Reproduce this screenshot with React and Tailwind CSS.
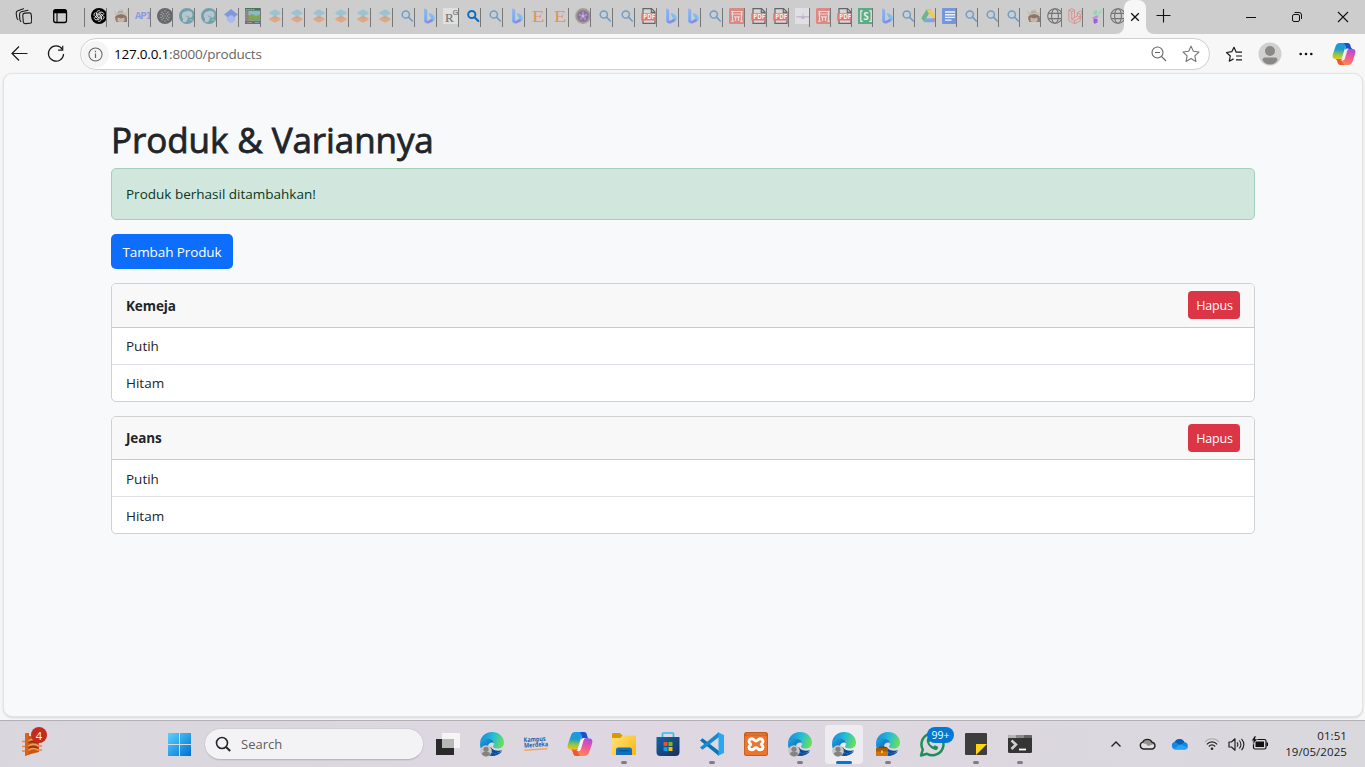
import React from "react";

/* ---------- Tab favicons (16 x 16) ---------- */

function Svg({ children, className = "", size = 16, box = "0 0 16 16" }) {
  return (
    <svg width={size} height={size} viewBox={box} fill="none" className={"shrink-0 " + className}>
      {children}
    </svg>
  );
}

const Gpt = () => (
  <Svg>
    <circle cx="8" cy="8" r="8" fill="#000" />
    <g stroke="#fff" strokeWidth="0.8">
      {[0, 60, 120, 180, 240, 300].map((a) => (
        <path key={a} transform={`rotate(${a} 8 8)`} d="M5.700 6V4.700a2.100 2.100 0 0 1 3.500-1.500M6.700 8.700V5.700L9.400 4.200" />
      ))}
    </g>
  </Svg>
);

const Character = () => (
  <Svg className="opacity-60">
    <path d="M1 2l3 1 4-2 4 1 3-1-1 6H2z" fill="#c3baa2" />
    <path d="M2 4l2-3 2 3M10 4l2-3 2 3" fill="#dcd6c8" />
    <path d="M5 3h5v2H5z" fill="#8f9aa0" />
    <path d="M2 10c0-5 12-5 12 0v4H3z" fill="#6a4735" />
    <path d="M4.500 9h7v4l-3.500 2-3.500-2z" fill="#c9a48c" />
    <path d="M3 8.500l5-2 5 2v2l-2-1-3 1-3-1-2 1z" fill="#5b3b30" />
    <path d="M0 10l2-1M14 10l2-1M0 15l3-2" stroke="#d8c9b4" strokeWidth="2" />
    <path d="M5 16l3-2 3 2z" fill="#ded5c4" />
  </Svg>
);

const Api = () => (
  <span className="block shrink-0 font-['Liberation_Mono',monospace] text-[10.500px] font-bold leading-4 tracking-[-0.8px] text-[#8b9be0]">
    API
  </span>
);

const DarkDots = () => (
  <Svg>
    <circle cx="8" cy="8" r="8" fill="#66686a" />
    <g fill="#a9abad">
      {[[5, 4.200], [8, 3], [11, 4.200], [6.500, 5.700], [9.500, 5.700], [4, 6.500], [12, 6.500], [5.500, 8], [8, 8], [10.500, 8], [4, 9.500], [12, 9.500], [6.500, 10.300], [9.500, 10.300], [5, 11.800], [8, 13], [11, 11.800]].map(([x, y]) => (
        <circle key={x + "-" + y} cx={x} cy={y} r="0.75" />
      ))}
    </g>
  </Svg>
);

const Elephant = () => (
  <Svg>
    <circle cx="8" cy="8" r="8" fill="#6fa0ab" />
    <path d="M3 9c-1-3 1-5.500 4-5.500 2-1.500 4.500-.5 6 1 1 2 .5 4.500-1.500 5.500-.7-1-2-1-2.500-.3L8 13c-1 1.500-3 1.500-4.500.5 1-1 .5-3-.5-4.500z" fill="#b7c6ca" />
    <path d="M7 7.500c.5 1.500 2 1.500 3 .3" stroke="#6fa0ab" strokeWidth=".8" />
    <path d="M10.500 12c1.500-.5 2.500 0 3.500.5" stroke="#b7c6ca" />
  </Svg>
);

const Scholar = () => (
  <Svg>
    <path d="M8 1l7 5.500-3 2H4l-3-2z" fill="#7d98de" />
    <circle cx="8" cy="10.500" r="4.300" fill="#a9baea" />
    <path d="M4.200 9c1.500-3.500 6.100-3.500 7.600 0" stroke="#8298d8" strokeWidth="1.500" />
  </Svg>
);

const Landscape = () => (
  <Svg>
    <path d="M0 0h16v16H0z" fill="#7fa286" />
    <path d="M3 3h13v5H3z" fill="#8db7cf" />
    <path d="M3 8l4-2 4 2 5-2v6H3z" fill="#84a54c" />
    <path d="M0 0h16v2.500H0z" fill="#45775d" />
    <path d="M1 1.500h9" stroke="#b5c58c" strokeWidth=".8" strokeDasharray="1.500 .7" />
    <path d="M0 2.500h3.500V13H0z" fill="#8e8580" />
    <path d="M0 13h16v3H0z" fill="#5e7784" />
    <path d="M2 14.500h5" stroke="#c98080" />
    <path d="M10 14.500h4" stroke="#7ea0c8" />
  </Svg>
);

const Stack = () => (
  <Svg>
    <path d="M8 8l5.500 2.300v1.800L8 14.700l-5.500-2.600v-1.800z" fill="#dfa888" />
    <path d="M8 1.300l5.500 2.900v1.600L8 8.500 2.500 5.800V4.200z" fill="#9cc3d0" />
    <path d="M4.500 9.300L8 8l3.500 1.300L8 10.700z" fill="#b9ab98" />
  </Svg>
);

const Search = ({ bold }) => (
  <Svg>
    <circle cx="6.800" cy="6.500" r="3.600" stroke={bold ? "#0f6cbd" : "#6f9dcb"} strokeWidth={bold ? 2 : 1.500} />
    <path d="M9.500 9.200l3.800 3.800" stroke={bold ? "#0f6cbd" : "#6f9dcb"} strokeWidth={bold ? 2.200 : 1.700} strokeLinecap="round" />
  </Svg>
);
const SearchBold = () => <Search bold />;

const Bing = () => (
  <Svg>
    <defs>
      <linearGradient id="bing" x1="3" y1="1" x2="5" y2="14" gradientUnits="userSpaceOnUse">
        <stop offset="0" stopColor="#8eb4ee" />
        <stop offset="1" stopColor="#74a6f4" />
      </linearGradient>
    </defs>
    <path d="M3.200.5c2 .4 3 1 3 2.800v8.200c-.1 1-.5 1.800-1 2.500-1.200-.3-2-1.200-2-2.500z" fill="url(#bing)" />
    <path d="M5.200 15.200c-1-.2-2-1.500-2-3.200 1 2 3.300.8 4.500.2l3-1.700 2.300 1.500c-1 1.500-2.500 2-3.500 2.600-1.500.9-3 1.100-4.300.6z" fill="#858fe6" />
    <path d="M7.800 5c3.500.8 6 2.500 6 5.200 0 1.800-.7 2.500-1.600 3 .2-1.600-.8-2.500-2.500-3.200-.8-1.500-1.800-3.500-1.900-5z" fill="#7bc0f3" />
  </Svg>
);

const ResearchGate = () => (
  <Svg>
    <path d="M0 0h16v16H0z" fill="#e0e0e0" />
    <text x="2" y="14" fontSize="13" fontFamily="Liberation Serif, serif" fill="#777" stroke="#777" strokeWidth=".2">R</text>
    <text x="9.800" y="7" fontSize="7" fontFamily="Liberation Sans, sans-serif" fill="#777" stroke="#777" strokeWidth=".2">G</text>
  </Svg>
);

const Etsy = () => (
  <Svg>
    <text x="1" y="13.800" fontSize="16" textLength="12.500" lengthAdjust="spacingAndGlyphs" fontFamily="Liberation Serif, serif" fill="#e0935c">E</text>
  </Svg>
);

const Flower = () => (
  <Svg>
    <circle cx="8" cy="8" r="7.300" fill="#9a8fa5" stroke="#aaa487" strokeWidth="1.200" />
    <circle cx="8" cy="8" r="5.600" fill="#84709f" />
    {[0, 72, 144, 216, 288].map((a) => (
      <circle key={a} cx="8" cy="4.800" r="1.300" fill="#a794c3" transform={`rotate(${a} 8 8)`} />
    ))}
    <circle cx="8" cy="8" r="1.700" fill="#c5bcd3" />
  </Svg>
);

const Pdf = () => (
  <Svg>
    <path d="M2 .6h8.500l3.500 3.500v11.300H2z" fill="#d6d6d6" stroke="#666" strokeWidth="1.200" />
    <path d="M10.300.6v3.700H14" stroke="#666" strokeWidth="1.200" />
    <path d="M.3 5.300h15.700v7.200H.3z" fill="#e07579" />
    <text x="8.200" y="11.200" textAnchor="middle" fontSize="6.200" fontWeight="700" fontFamily="Open Sans, sans-serif" fill="#fbeeee">PDF</text>
  </Svg>
);

const RedGate = () => (
  <Svg>
    <rect width="16" height="16" rx="1.500" fill="#dc8984" />
    <path d="M2 3.500h12M2 6h12" stroke="#ead5d2" strokeWidth="1" />
    <path d="M3.500 3.500v10M12.500 3.500v10M6.500 9v4M9.500 9v4M5 8.800h6" stroke="#ead5d2" strokeWidth="1.200" />
    <path d="M2 13.300h3M11 13.300h3" stroke="#ead5d2" />
  </Svg>
);

const PlaneMark = () => (
  <Svg>
    <path d="M0 0h16v16H0z" fill="#e0dfe3" />
    <path d="M1.500 8.800h13" stroke="#c3b8cc" strokeWidth="1.500" />
    <path d="M8 5.500v4" stroke="#c9bfd1" strokeWidth="1.200" />
    <path d="M5.500 10.500L8 8.500l2.500 2z" fill="#b6a9c3" />
  </Svg>
);

const GreenS = () => (
  <Svg>
    <path d="M0 0h16v16H0z" fill="#5dab84" />
    <path d="M4.800 2.800H2.800v10.500h2M11.200 2.800h2v10.500h-2" stroke="#e3efe8" strokeWidth="1.200" />
    <text x="8" y="11.700" textAnchor="middle" fontSize="10" fontWeight="700" fontFamily="Open Sans, sans-serif" fill="#e3efe8">S</text>
  </Svg>
);

const Drive = () => (
  <Svg>
    <path d="M5.500 1.500h5L5.300 10.300 3 14 .3 10z" fill="#6fb58a" />
    <path d="M5.500 1.500h5l5.200 8.700h-5z" fill="#e9cb63" />
    <path d="M5.400 10.200h10.300L13.200 14.300H3z" fill="#7da4ea" />
    <path d="M8 6l2.500 4.200h-5z" fill="#cdcdcd" />
    <path d="M12.800 10.200h2.900l-2.500 4.100z" fill="#d98a82" />
  </Svg>
);

const Docs = () => (
  <Svg>
    <rect width="16" height="16" rx="1" fill="#7596dd" />
    <path d="M3 4h10M3 6.700h10M3 9.400h10M3 12.100h6.500" stroke="#eef2fb" strokeWidth="1.400" />
  </Svg>
);

const Globe = () => (
  <Svg>
    <g stroke="#747474" strokeWidth="1.100">
      <circle cx="8" cy="8" r="7.300" />
      <ellipse cx="8" cy="8" rx="3.400" ry="7.300" />
      <path d="M1.300 5.400h13.400M1.300 10.600h13.400" />
    </g>
  </Svg>
);

const Laravel = () => (
  <Svg>
    <path
      d="M.8 2.200l2.900-1.500 2.900 1.500v7.300l2.800-1.600V4.700l2.900-1.600 2.900 1.600v3.200l-2.900 1.700v3.100l-5.700 3.100-5.800-3.200zM.8 2.200l2.900 1.600 2.900-1.600M3.700 3.800v7.400l2.900-1.700M9.400 4.700l2.900 1.600 2.900-1.600M12.300 6.300v3.300L6.600 12.800l-2.900-1.600M12.300 9.600L9.400 7.900M6.600 12.800v3"
      stroke="#dd8b86"
      strokeWidth=".9"
    />
  </Svg>
);

const Filament = () => (
  <Svg>
    <path d="M4.500 3.500L8 1.500v4.500l-3 1z" fill="#8fd3b4" />
    <path d="M8.500 4.500L13 1v3.500l-3 2.500z" fill="#9bd8be" />
    <path d="M3.500 9.500L7 7.500h3L8 10.500 6.500 11H3.500z" fill="#bb93dc" />
    <path d="M4.500 11h4v3.500L5.500 16 4.500 14z" fill="#a05fd8" />
  </Svg>
);

const TABS = [
  Gpt, Character, Api, DarkDots, Elephant, Elephant, Scholar, Landscape,
  Stack, Stack, Stack, Stack, Stack, Stack, Search, Bing, ResearchGate, SearchBold, Search, Bing,
  Etsy, Etsy, Flower, Search, Search, Pdf, Bing, Bing, Search, RedGate, Pdf, Pdf,
  PlaneMark, RedGate, Pdf, GreenS, Bing, Search, Drive, Docs, Search, Search, Search,
  Character, Globe, Laravel, Filament,
];

function TabStrip() {
  return (
    <div className="flex h-[34px] shrink-0 bg-[#f7f7f7]">
      <div className="flex h-[34px] w-[1124px] shrink-0 overflow-hidden rounded-br-lg bg-[#cdcdcd]">
        <div className="flex w-[84px] shrink-0 items-start pl-[15px] pt-2">
          <Svg size={17} box="0 0 17 17">
            <g stroke="#1a1a1a" strokeWidth="1.100" strokeLinejoin="round" strokeLinecap="round">
              <rect x="8" y="5" width="8.500" height="10.500" rx="2" transform="rotate(-4 12 10)" />
              <path d="M5.800 13.500c-.6-.5-.8-1-.9-1.800L4.500 6.500c0-1.500.5-2.300 1.800-2.700L13 2.300M2.800 11.500c-.6-.5-.8-1-1-2L1.200 5.500C1 4 1.500 3.300 2.800 2.800L8.500.8" />
            </g>
          </Svg>
          <Svg size={16} className="ml-5">
            <rect x="1.700" y="1.700" width="12.800" height="12.800" rx="2" stroke="#000" strokeWidth="1.300" />
            <path d="M1.500 3.500a2 2 0 0 1 2-2h9a2 2 0 0 1 2 2v1.700h-13z" fill="#000" />
            <path d="M5 5v9.500" stroke="#000" strokeWidth="1.100" />
          </Svg>
        </div>
        <div className="mt-2 h-[19px] w-px shrink-0 bg-[#777]" />
        {TABS.map((Icon, i) => (
          <div key={i} className={(i < 32 ? "w-[22px]" : "w-[21px]") + " mt-2 flex h-[19px] shrink-0 overflow-hidden border-r border-[#777] pl-1.5"}>
            <Icon />
          </div>
        ))}
        <div className="w-5 shrink-0 overflow-hidden pl-1.5 pt-2"><Globe /></div>
      </div>
      <div className="w-[22px] shrink-0 bg-[#cdcdcd]">
        <div className="flex h-[34px] items-center justify-center rounded-t-lg bg-[#f7f7f7]">
          <Svg size={10} box="0 0 10 10"><path d="M1.200 1.200l7.600 7.600M8.800 1.200L1.200 8.800" stroke="#111" strokeWidth="1.300" /></Svg>
        </div>
      </div>
      <div className="flex grow items-start rounded-bl-lg bg-[#cdcdcd]">
        <Svg size={15} box="0 0 15 15" className="ml-2.5 mt-2"><path d="M7.500 1v13.500M.5 7.500h14" stroke="#111" strokeWidth="1.100" /></Svg>
        <Svg size={10} box="0 0 10 10" className="ml-[75px] mt-3"><path d="M0 5.500h10" stroke="#111" /></Svg>
        <Svg size={12} box="0 0 12 12" className="ml-[35px] mt-[11px]">
          <rect x="1.500" y="3.500" width="7" height="7" rx="1.500" stroke="#111" />
          <path d="M3.500 1.500h4.500a2.500 2.500 0 0 1 2.500 2.500v4" stroke="#111" />
        </Svg>
        <Svg size={12} box="0 0 12 12" className="ml-[34px] mt-[11px]"><path d="M1 1l10 10M11 1L1 11" stroke="#111" strokeWidth="1.100" /></Svg>
      </div>
    </div>
  );
}

const STAR = "M8 1l2.100 4.600 5 .6-3.700 3.400 1 5L8 12.100l-4.400 2.500 1-5L.9 6.200l5-.6z";

function CopilotMark({ size = 24 }) {
  return (
    <Svg size={size} box="0 0 24 24">
      <defs>
        <linearGradient id="cpA" x1="5" y1="1" x2="4" y2="17" gradientUnits="userSpaceOnUse">
          <stop stopColor="#159bea" />
          <stop offset=".4" stopColor="#219bd0" />
          <stop offset=".7" stopColor="#8ac64b" />
          <stop offset="1" stopColor="#f2c40f" />
        </linearGradient>
        <linearGradient id="cpB" x1="19" y1="6" x2="14" y2="23" gradientUnits="userSpaceOnUse">
          <stop stopColor="#a14bea" />
          <stop offset=".5" stopColor="#f2569a" />
          <stop offset="1" stopColor="#fb8a4e" />
        </linearGradient>
      </defs>
      <path d="M7.500 1H16c-1.800.5-2.300 2.500-3 5l-2.600 8.500c-.5 1.700-1.600 2.500-3.400 2.500H3.500C1 17 0 15.500.8 12.500L3.300 5C4.100 2.200 5.300 1 7.500 1z" fill="url(#cpA)" />
      <path d="M11.500 1h4.300c1.700 0 2.400 1.300 2.900 3.500.3 1.300.8 2 1.800 2.500h-4.200c-1.800 0-2.800.5-3.500 2.500.8-3.500 1.500-7-1.300-8.500z" fill="#1a50cc" />
      <path d="M16.500 23H8c1.800-.5 2.300-2.500 3-5l2.600-8.500C14.100 7.800 15.200 7 17 7h3.500c2.500 0 3.500 1.500 2.700 4.500l-2.500 7.500c-.8 2.800-2 4-4.200 4z" fill="url(#cpB)" />
      <path d="M12.500 23H8.200c-1.700 0-2.400-1.300-2.900-3.500-.3-1.300-.8-2-1.800-2.500h4.200c1.800 0 2.800-.5 3.500-2.500-.8 3.500-1.500 7 1.300 8.500z" fill="#f0592f" />
      <path d="M12.800 8.500C13.300 7 14.300 6.500 16 6.500h1c-1.200.7-1.500 1.500-1.900 2.800l-2.200 7.200c-.5 1.500-1.200 2-2.900 2H8.500c1.200-.7 1.500-1.500 1.900-2.800z" fill="#f4eef6" />
    </Svg>
  );
}

function Toolbar() {
  return (
    <div className="flex h-[39px] shrink-0 items-center bg-[#f7f7f7]">
      <Svg size={17} box="0 0 17 17" className="ml-[11px]"><path d="M16.500 8.500H1M8 1.500l-7 7 7 7" stroke="#1a1a1a" strokeWidth="1.200" /></Svg>
      <Svg size={18} box="0 0 18 18" className="ml-[19px] mt-px">
        <path d="M15.300 4.300A7.600 7.600 0 1 0 16.600 9" stroke="#1a1a1a" strokeWidth="1.200" />
        <path d="M15.700.8v4.400h-4.600" stroke="#1a1a1a" strokeWidth="1.200" />
      </Svg>
      <div className="ml-[15px] mt-px flex h-8 w-[1130px] shrink-0 items-center rounded-full border border-[#cfcfcf] bg-white pl-px pr-[9px]">
        <div className="flex h-[27px] w-[27px] items-center justify-center rounded-full bg-[#f5f5f5]">
          <Svg size={15}>
            <circle cx="8" cy="8" r="7" stroke="#666" strokeWidth="1.100" />
            <path d="M8 7v4.600M8 4v1.500" stroke="#666" strokeWidth="1.300" />
          </Svg>
        </div>
        <div className="ml-1 grow pl-px font-['Open_Sans','Noto_Sans',sans-serif] text-[13.5px] tracking-[-0.21px] text-[#666]">
          <span className="text-black">127.0.0.1</span>:8000/products
        </div>
        <Svg size={16}>
          <circle cx="6.500" cy="6.500" r="5.500" stroke="#666" strokeWidth="1.100" />
          <path d="M4 6.500h5M10.500 10.500l4.500 4.500" stroke="#666" strokeWidth="1.100" />
        </Svg>
        <Svg size={18} className="ml-[15px]"><path d={STAR} stroke="#777" strokeLinejoin="round" /></Svg>
      </div>
      <Svg size={18} box="0 0 18 18" className="ml-[15px]">
        <path d="M17 7.200h-5.800L9 2.300 6.800 6.700l-5.300.8L5.300 11l-1 5.200 4.200-2.300" stroke="#1a1a1a" strokeWidth="1.200" strokeLinejoin="round" />
        <path d="M11 11h6M11 14.800h6" stroke="#1a1a1a" strokeWidth="1.200" />
      </Svg>
      <Svg size={24} box="0 0 24 24" className="ml-[15px]">
        <circle cx="12" cy="12" r="11.500" fill="#d2d0ce" />
        <circle cx="12" cy="9" r="5" fill="#8a8886" />
        <path d="M4.500 18c0-2 1.500-2.500 3-2.500h9c1.500 0 3 .5 3 2.500-1.500 3-4.500 4.500-7.500 4.500S6 21 4.500 18z" fill="#8a8886" />
      </Svg>
      <Svg size={14} box="0 0 14 14" className="ml-[17px]">
        <g fill="#111"><circle cx="1.700" cy="7" r="1.300" /><circle cx="7" cy="7" r="1.300" /><circle cx="12.300" cy="7" r="1.300" /></g>
      </Svg>
      <div className="ml-[19px]"><CopilotMark /></div>
    </div>
  );
}

/* ---------- Page ---------- */

function ProductCard({ name, variants, headerClass, nameClass, rowClass, className }) {
  return (
    <section className={"overflow-hidden rounded-[5px] border border-[#cfd0d1] bg-white " + className}>
      <header className={"flex justify-between border-b border-[#c9cacb] bg-[#f8f8f8] px-3.5 pt-[7px] " + headerClass}>
        <strong className={"text-[13.5px] font-bold leading-[22px] tracking-[-0.1px] " + nameClass}>{name}</strong>
        <button className="h-7 w-[52px] rounded-[4px] bg-[#dc3545] pl-px pt-0.5 text-[12.5px] tracking-[-0.2px] text-white">Hapus</button>
      </header>
      <ul className="divide-y divide-[#dee2e6]">
        {variants.map((v) => (
          <li key={v} className={"flex h-[36.500px] items-center px-3.5 text-[13.5px] " + rowClass}>{v}</li>
        ))}
      </ul>
    </section>
  );
}

function Page() {
  return (
    <main className="ml-[3px] mr-[2px] flex h-[644px] shrink-0 flex-col rounded-[9px] border border-[#e3e3e3] bg-[#f8f9fb] px-[107px] pt-[45px] font-['Open_Sans','Noto_Sans',sans-serif] text-[#212529] shadow-sm">
      <h1 className="mb-px h-[48px] whitespace-nowrap text-[35px] leading-[41px] tracking-[-0.08px] [-webkit-text-stroke:0.8px_#212529]">Produk &amp; Variannya</h1>
      <div className="flex h-[52px] shrink-0 items-center rounded-[5px] border border-[#a3cfbb] bg-[#d1e7dd] px-3.5 text-[13.5px] text-[#0a3622]">
        Produk berhasil ditambahkan!
      </div>
      <button className="mt-3.5 h-[35px] w-[122px] shrink-0 rounded-[5px] bg-[#0d6efd] pt-px text-[13.5px] tracking-[-0.1px] text-white">Tambah Produk</button>
      <ProductCard name="Kemeja" variants={["Putih", "Hitam"]} className="mt-3.5 h-[119px] shrink-0" headerClass="h-[44px]" nameClass="mt-1" rowClass="" />
      <ProductCard name="Jeans" variants={["Putih", "Hitam"]} className="mt-3.5 h-[118px] shrink-0" headerClass="h-[43px]" nameClass="mt-[3px]" rowClass="pt-0.5" />
    </main>
  );
}

/* ---------- Taskbar ---------- */

function EdgeMark({ badge }) {
  return (
    <Svg size={26} box="0 0 26 26">
      <defs>
        <linearGradient id="edTop" x1="3" y1="5" x2="24" y2="13" gradientUnits="userSpaceOnUse">
          <stop stopColor="#1791dc" />
          <stop offset=".5" stopColor="#26bfd3" />
          <stop offset="1" stopColor="#6ddf55" />
        </linearGradient>
        <linearGradient id="edLow" x1="2" y1="9" x2="14" y2="24" gradientUnits="userSpaceOnUse">
          <stop stopColor="#1ba0e4" />
          <stop offset="1" stopColor="#0a50a0" />
        </linearGradient>
      </defs>
      <path d="M1 13C1 6 6 1 13 1s12 5 12 10.500c0 4-3 6-6.500 6-3 0-4.500-1-4.500-2 0-.7 1-1 1-3 0-2.500-2.500-4.500-6-4.500-4 0-7 2-8 5z" fill="url(#edTop)" />
      <path d="M1 13c1-4 4.500-5.500 8-5.500 3.500 0 6 2.500 6 5-1-2-6-1-6 3 0 5 5 7.500 9 6.500 2-.5 3.500-1 5-2-2 3.500-6 5-10 5C6 25 1 20 1 13z" fill="url(#edLow)" />
      <path d="M9 15.500c0 5 5 7.500 9 6.500 2-.5 4.500-2 5.200-3-3 1.300-9 1-11-2.500z" fill="#0b4b98" />
      {badge === "person" && (
        <g>
          <circle cx="7" cy="20" r="5.800" fill="#c9c7c6" />
          <circle cx="7" cy="18.300" r="2.600" fill="#858382" />
          <path d="M2.800 23c0-3 8.400-3 8.400 0-2 3.200-6.400 3.200-8.400 0z" fill="#858382" />
        </g>
      )}
      {badge === "case" && (
        <g>
          <path d="M4.500 17.500v-1.300h5v1.300" stroke="#6c430d" strokeWidth="1" />
          <rect x="1" y="17" width="12" height="8" rx=".5" fill="#d0740c" />
          <path d="M1 17h12v3.500H1z" fill="#a45a0a" />
          <rect x="6" y="19.500" width="2" height="2.500" fill="#f3bd35" />
        </g>
      )}
    </Svg>
  );
}

const TaskView = () => (
  <Svg size={26} box="0 0 26 26">
    <path d="M1 8h18v16H1z" fill="#292a2a" />
    <path d="M7 2h18v15H7z" fill="#f5f5f5" />
    <path d="M7 8h12v9H7z" fill="#b7b8b8" />
  </Svg>
);

const Kampus = () => (
  <Svg size={26} box="0 0 26 26" className="overflow-visible">
    <g transform="rotate(-4 13 13)" fontFamily="Open Sans, sans-serif" fontWeight="700" fill="#1f5fa8">
      <text x="1" y="10.500" fontSize="6.500" textLength="22" lengthAdjust="spacingAndGlyphs">Kampus</text>
      <text x="1" y="16" fontSize="6.500" textLength="24" lengthAdjust="spacingAndGlyphs">Merdeka</text>
      <path d="M1 18.500h23" stroke="#f2a65a" strokeWidth="1.600" />
    </g>
  </Svg>
);

const Folder = () => (
  <Svg size={26} box="0 0 26 26">
    <defs><linearGradient id="fo" x1="3" y1="5" x2="23" y2="24" gradientUnits="userSpaceOnUse"><stop stopColor="#ffe07c" /><stop offset="1" stopColor="#f9b90d" /></linearGradient></defs>
    <path d="M1 3.500C1 2.500 1.500 2 2.500 2H9l3 3h-1v5H1z" fill="#d79b06" />
    <path d="M1 7h8l3-2.500h12c.7 0 1 .3 1 1V23c0 .7-.3 1-1 1H2c-.7 0-1-.3-1-1z" fill="url(#fo)" />
    <path d="M5 24v-5c0-1.700 1-2.500 2.500-2.500h11c1.500 0 2.500.8 2.500 2.500v5z" fill="#0f70c0" />
    <path d="M8 19.800h10" stroke="#0a4f91" strokeWidth="1.200" />
  </Svg>
);

const Store = () => (
  <Svg size={26} box="0 0 26 26">
    <defs><linearGradient id="st" x1="4" y1="5" x2="20" y2="25" gradientUnits="userSpaceOnUse"><stop stopColor="#1264aa" /><stop offset="1" stopColor="#183562" /></linearGradient></defs>
    <path d="M7.500 6V3c0-.7.300-1 1-1h9c.7 0 1 .3 1 1v3" stroke="#31bcec" strokeWidth="1.700" />
    <path d="M1.500 6h23v15c0 2.500-1.200 4-4 4h-15c-2.800 0-4-1.500-4-4z" fill="url(#st)" />
    <path d="M8.500 11h4v4h-4z" fill="#f25022" /><path d="M13.500 11h4v4h-4z" fill="#7fba00" />
    <path d="M8.500 16h4v4h-4z" fill="#00a4ef" /><path d="M13.500 16h4v4h-4z" fill="#ffb900" />
  </Svg>
);

const Code = () => (
  <Svg size={26} box="0 0 26 26">
    <path d="M1 9.500l2.500-2.200L20 20v5z" fill="#0b73b5" />
    <path d="M1 16.500l2.500 2.200L20 6V1z" fill="#1689d0" />
    <path d="M18.500 1L25 4v18l-6.500 3c.8-.6 1-1 1-2V3c0-1-.2-1.400-1-2z" fill="#2aa7ed" />
  </Svg>
);

const Xampp = () => (
  <Svg size={26} box="0 0 26 26">
    <rect x="1" y="1" width="24" height="24" rx="2.500" fill="#c95c1b" />
    <rect x="1.800" y="4.500" width="22.400" height="19.500" rx="2" fill="#ed742c" />
    <path d="M3 3h20" stroke="#dc8c58" />
    <path
      d="M9 7.800c2 0 2.300 2.200 4 2.200s2-2.200 4-2.200c3 0 4 3.200 1.700 4.800-.6.500-.6.900 0 1.400 2.300 1.600 1.300 4.800-1.700 4.800-2 0-2.300-2.200-4-2.200s-2 2.200-4 2.200c-3 0-4-3.200-1.700-4.800.6-.5.6-.9 0-1.400C5 11 6 7.800 9 7.800z"
      stroke="#fff"
      strokeWidth="2.900"
    />
  </Svg>
);

const WhatsApp = () => (
  <Svg size={26} box="0 0 26 26">
    <path d="M2 24.500l1.800-6A11 11 0 1 1 8 22.800z" stroke="#1e8e5a" strokeWidth="2.500" strokeLinejoin="round" />
    <path d="M8 7.500c1-1 2-.8 2.400.3l.8 2c.2.700-.9 1.500-.9 2 .8 1.700 2 2.900 3.900 3.800.7 0 1.300-1.500 2-1.200l2.400 1.200c.8.5.5 2-.3 2.800C14.500 21 6 13 8 7.500z" fill="#1e8e5a" />
  </Svg>
);

const Sticky = () => (
  <Svg size={26} box="0 0 26 26">
    <rect x="2" y="2" width="22" height="22" rx="1" fill="#3d3d3d" />
    <path d="M13 24V13h11z" fill="#ffd60c" />
  </Svg>
);

const Terminal = () => (
  <Svg size={26} box="0 0 26 26">
    <rect x="1" y="4" width="24" height="18" rx="1.500" fill="#353535" />
    <path d="M1 7V5.500C1 4.500 1.500 4 2.500 4H9v3z" fill="#b5b5b5" /><path d="M9 4h8v3H9z" fill="#8a8a8a" /><path d="M17 4h6.500c1 0 1.500.5 1.500 1.500V7h-8z" fill="#636363" />
    <path d="M4.500 9.500l4.500 4-4.500 4.500" stroke="#cfcfcf" strokeWidth="2.500" />
    <path d="M12 18.500h7" stroke="#fff" strokeWidth="1.800" />
  </Svg>
);

const APPS = [
  { icon: <TaskView /> },
  { icon: <EdgeMark badge="person" /> },
  { icon: <Kampus /> },
  { icon: <CopilotMark size={26} /> },
  { icon: <Folder />, open: true },
  { icon: <Store /> },
  { icon: <Code />, open: true },
  { icon: <Xampp /> },
  { icon: <EdgeMark badge="person" />, open: true },
  { icon: <EdgeMark badge="person" />, active: true },
  { icon: <EdgeMark badge="case" />, open: true },
  { icon: <WhatsApp />, badge: "99+" },
  { icon: <Sticky />, open: true },
  { icon: <Terminal />, open: true },
];

function Taskbar() {
  return (
    <footer className="flex h-[47px] shrink-0 border-t border-[#b2b0b4] bg-linear-to-r from-[#d9d7dd] via-[#dfd7e2] to-[#d9d8dd] font-['Open_Sans','Noto_Sans',sans-serif]">
      <div className="relative w-[167px] shrink-0 pl-[21px] pt-[11px]">
        <Svg size={24} box="0 0 24 24">
          <path d="M4 1.500L8 1v3l10 1v15l-8 2-6 2z" fill="#c95618" />
          <path d="M4 1.500L7.500 1v21L4 24z" fill="#d8631c" />
          <path d="M1 9.500h3M1 14.500h3M1 19h3M19 9.500h2M18 14h3M17 18h4" stroke="#e8864b" strokeWidth="1.500" />
          <path d="M7.500 9c3-2.500 6-2 9.500-.5M7.500 14c3-2.500 6-2.500 10.500 0M7.500 18.500c3-2.500 6-2.500 9.500-.5" stroke="#f19961" strokeWidth="1.500" />
          <path d="M7.500 11c3-2 6-1.500 9.500 0M7.500 16c3-2 6-1.500 9.500 0" stroke="#8b3509" strokeWidth="1.300" />
        </Svg>
        <div className="absolute left-[31px] top-[6px] flex h-4 w-4 items-center justify-center rounded-full bg-[#c42b1c] text-[11px] leading-none text-white">4</div>
      </div>
      <Svg size={24} box="0 0 24 24" className="mt-3">
        <defs><linearGradient id="win" x1="1" y1="1" x2="23" y2="23" gradientUnits="userSpaceOnUse"><stop stopColor="#58d0fb" /><stop offset="1" stopColor="#0072d2" /></linearGradient></defs>
        <path d="M1 0h11v11H1zM13 0h11v11H13zM1 12h11v11H1zM13 12h11v11H13z" fill="url(#win)" />
      </Svg>
      <div className="ml-3.5 mt-2 flex h-[31px] w-[218px] shrink-0 items-center rounded-full border-b border-[#b9b8be] bg-[#f3f3f5] pl-2.5 text-[13px] text-[#5d5d5d] shadow-[0_0_0_1px_#d0ced4]">
        <Svg size={16} className="mr-2.5">
          <circle cx="7" cy="7" r="5.500" stroke="#262626" strokeWidth="1.600" />
          <path d="M11 11l4.200 4" stroke="#262626" strokeWidth="2" />
        </Svg>
        <span className="pt-px">Search</span>
      </div>
      <div className="ml-[3px] flex">
        {APPS.map((app, i) => (
          <div key={i} className="flex w-11 shrink-0 justify-center">
            <div className={"relative mt-1 flex h-[39px] w-[38px] justify-center rounded pt-1.5 " + (app.active ? "bg-[#eeecf1]" : "")}>
              {app.icon}
              {app.open && <div className="absolute bottom-0 h-[3px] w-1.5 rounded-full bg-[#807e84]" />}
              {app.active && <div className="absolute bottom-0 h-[3px] w-4 rounded-full bg-[#0078d4]" />}
              {app.badge && (
                <div className="absolute left-[14px] top-[2px] flex h-4 w-[27px] items-center justify-center rounded-full bg-[#0078d4] text-[10.5px] leading-none text-white">
                  {app.badge}
                </div>
              )}
            </div>
          </div>
        ))}
      </div>
      <div className="ml-[68px] flex grow items-center pr-[18px]">
        <Svg size={12} box="0 0 12 12"><path d="M1.500 8.500L6 4l4.500 4.500" stroke="#1d1d1d" strokeWidth="1.300" /></Svg>
        <Svg size={18} box="0 0 18 18" className="ml-[17px]">
          <path d="M4.500 14a3.500 3.500 0 0 1-.8-6.800A5.200 5.200 0 0 1 13 7.200a3.500 3.500 0 0 1 .5 6.800z" fill="#e2e2e3" />
          <path d="M3.500 8c1.500-4 7.500-5 9.500-.5L15 9l-6 2-2-2z" fill="#949494" />
          <path d="M4.500 14a3.500 3.500 0 0 1-.8-6.800A5.200 5.200 0 0 1 13 7.200a3.500 3.500 0 0 1 .5 6.800z" stroke="#222" strokeWidth="1.400" />
        </Svg>
        <Svg size={18} box="0 0 18 18" className="ml-3.5">
          <path d="M4.500 14.500a4 4 0 0 1-.8-7.800 5.500 5.500 0 0 1 9.800.5 3.700 3.700 0 0 1 .3 7.300z" fill="#1687df" />
          <path d="M3.700 6.700a5.500 5.500 0 0 1 9.800.5L9 10z" fill="#0a5fb4" />
          <path d="M2.500 13.800L9.500 9.500l7.500 3c-.5 1.300-1.700 2-3 2h-9.500c-.8 0-1.500-.3-2-.7z" fill="#29a4ec" />
        </Svg>
        <Svg size={16} className="ml-[15px]">
          <path d="M1 6c4-4.300 10-4.300 14 0" stroke="#aaa" strokeWidth="1.100" />
          <path d="M2.800 8.300c3-3.200 7.400-3.200 10.400 0M4.800 10.500c2-2 4.400-2 6.400 0" stroke="#222" strokeWidth="1.200" />
          <circle cx="8" cy="12.700" r="1.300" fill="#222" />
        </Svg>
        <Svg size={17} box="0 0 17 17" className="ml-2">
          <path d="M1 6h2.500L7 2.800v11.400L3.500 11H1z" stroke="#222" strokeWidth="1.200" strokeLinejoin="round" />
          <path d="M9 6.300c1 1.300 1 3.100 0 4.400M11.300 4.500c2 2.400 2 5.600 0 8M13.500 2.800c2.900 3.500 2.900 7.900 0 11.400" stroke="#222" strokeWidth="1.100" />
        </Svg>
        <Svg size={18} box="0 0 18 18" className="ml-1.5">
          <rect x="2.500" y="4.500" width="12.500" height="9.500" rx="1.500" stroke="#111" strokeWidth="1.200" />
          <path d="M4.500 6.500H13v5.500H4.500zM15.500 7.500h1.500v3.500h-1.500z" fill="#111" />
          <path d="M3.500 1L.5 5.800h2.300L2 9.500 6.500 4H4.200l1-3z" fill="#111" stroke="#d9d7dd" strokeWidth=".5" />
        </Svg>
        <div className="grow whitespace-nowrap text-right text-[11.500px] leading-4 tracking-[0.08px] text-[#1c1c1c]">
          <div>01:51</div>
          <div>19/05/2025</div>
        </div>
      </div>
    </footer>
  );
}

export default function App() {
  return (
    <div className="flex h-[767px] w-[1365px] flex-col overflow-hidden bg-[#f7f7f7]">
      <TabStrip />
      <Toolbar />
      <Page />
      <div className="h-[3px] shrink-0" />
      <Taskbar />
    </div>
  );
}
